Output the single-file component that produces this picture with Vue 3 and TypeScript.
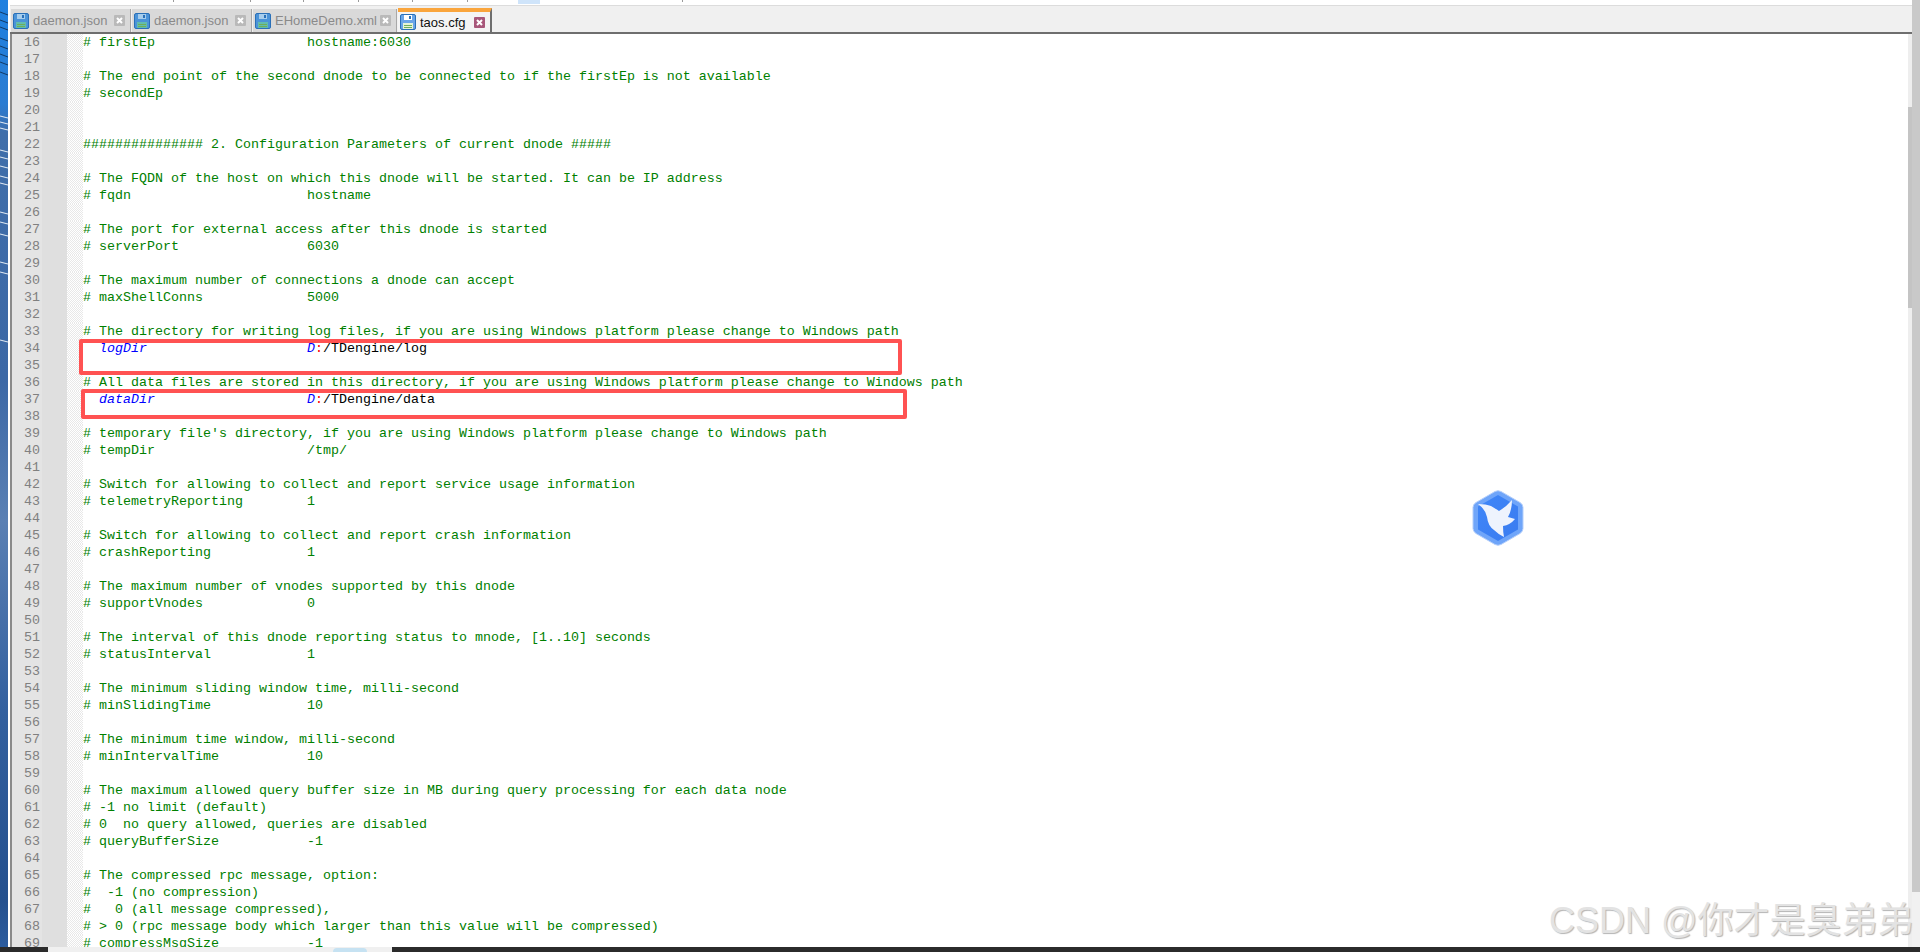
<script setup lang="ts">
type Seg = { t: string; c: string }
type Line = { n: number; segs: Seg[] }

const kv = (name: string, value: string) => `# ${name}`.padEnd(28, ' ') + value

const raw: string[] = [
  kv('firstEp', 'hostname:6030'),
  '',
  '# The end point of the second dnode to be connected to if the firstEp is not available',
  '# secondEp',
  '',
  '',
  '############### 2. Configuration Parameters of current dnode #####',
  '',
  '# The FQDN of the host on which this dnode will be started. It can be IP address',
  kv('fqdn', 'hostname'),
  '',
  '# The port for external access after this dnode is started',
  kv('serverPort', '6030'),
  '',
  '# The maximum number of connections a dnode can accept',
  kv('maxShellConns', '5000'),
  '',
  '# The directory for writing log files, if you are using Windows platform please change to Windows path',
  '@logDir|/TDengine/log',
  '',
  '# All data files are stored in this directory, if you are using Windows platform please change to Windows path',
  '@dataDir|/TDengine/data',
  '',
  "# temporary file's directory, if you are using Windows platform please change to Windows path",
  kv('tempDir', '/tmp/'),
  '',
  '# Switch for allowing to collect and report service usage information',
  kv('telemetryReporting', '1'),
  '',
  '# Switch for allowing to collect and report crash information',
  kv('crashReporting', '1'),
  '',
  '# The maximum number of vnodes supported by this dnode',
  kv('supportVnodes', '0'),
  '',
  '# The interval of this dnode reporting status to mnode, [1..10] seconds',
  kv('statusInterval', '1'),
  '',
  '# The minimum sliding window time, milli-second',
  kv('minSlidingTime', '10'),
  '',
  '# The minimum time window, milli-second',
  kv('minIntervalTime', '10'),
  '',
  '# The maximum allowed query buffer size in MB during query processing for each data node',
  '# -1 no limit (default)',
  '# 0  no query allowed, queries are disabled',
  kv('queryBufferSize', '-1'),
  '',
  '# The compressed rpc message, option:',
  '#  -1 (no compression)',
  '#   0 (all message compressed),',
  '# > 0 (rpc message body which larger than this value will be compressed)',
  kv('compressMsgSize', '-1'),
]

const toSegs = (s: string): Seg[] => {
  if (s.startsWith('@')) {
    const [name, path] = s.slice(1).split('|')
    return [
      { t: ('  ' + name).padEnd(28, ' '), c: 'key' },
      { t: 'D', c: 'key' },
      { t: ':', c: 'colon' },
      { t: path, c: 'plain' },
    ]
  }
  return [{ t: s, c: 'comment' }]
}

const lines: Line[] = raw.map((s, i) => ({ n: 16 + i, segs: toSegs(s) }))

const tabs = [
  { name: 'daemon.json', width: 120, active: false },
  { name: 'daemon.json', width: 120, active: false },
  { name: 'EHomeDemo.xml', width: 144, active: false },
  { name: 'taos.cfg', width: 94, active: true },
]

const ticks = [173, 250, 303, 358, 412, 467, 682]

const darkStreaks = [12, 20, 27, 38, 46, 54, 62, 72]
const lightStreaks = [116, 122, 128, 150, 157, 166, 176, 183, 212, 222, 234, 262, 272, 340]
</script>

<template>
  <div class="screen">
    <svg class="wallpaper" viewBox="0 0 8 947" width="8" height="947" preserveAspectRatio="none">
      <defs>
        <linearGradient id="sky" x1="0" y1="0" x2="0" y2="1">
          <stop offset="0" stop-color="#1f80e0" />
          <stop offset="0.11" stop-color="#2a7cd2" />
          <stop offset="0.14" stop-color="#3f6eaa" />
          <stop offset="0.4" stop-color="#3c68a6" />
          <stop offset="0.55" stop-color="#5a80b4" />
          <stop offset="0.75" stop-color="#33609f" />
          <stop offset="0.95" stop-color="#24508e" />
          <stop offset="1" stop-color="#2c5c9e" />
        </linearGradient>
      </defs>
      <rect width="8" height="947" fill="url(#sky)" />
      <path v-for="y in darkStreaks" :key="'d' + y" :d="`M0 ${y}L8 ${y + 3}`" stroke="#123a66" stroke-width="1" />
      <path v-for="y in lightStreaks" :key="'l' + y" :d="`M0 ${y}L8 ${y + 2}`" stroke="#dfe8f2" stroke-width="1.200" />
    </svg>
    <div class="window">
      <div class="topstrip">
        <i v-for="x in ticks" :key="x" class="tick" :style="{ left: x - 10 + 'px' }"></i>
        <i class="topblob"></i>
      </div>
      <div class="tabbar">
        <div
          v-for="(tab, i) in tabs"
          :key="i"
          class="tab"
          :class="{ active: tab.active }"
          :style="{ width: tab.width + 'px' }"
        >
          <svg class="disk" viewBox="0 0 16 16" width="16" height="16">
            <rect x="0.500" y="0.500" width="15" height="15" rx="1.500" :fill="tab.active ? '#6aa5e8' : '#4b93d8'" stroke="#2a70b8" />
            <rect x="4" y="1" width="8" height="5" :fill="tab.active ? '#ffffff' : '#a7cdec'" />
            <rect x="9" y="2" width="2" height="3" fill="#2a70b8" />
            <rect x="3" y="9" width="10" height="6" :fill="tab.active ? '#e4f3d6' : '#62bcae'" />
            <rect x="4" y="11" width="8" height="1" fill="#6fae5a" />
            <rect x="4" y="13" width="8" height="1" fill="#6fae5a" />
          </svg>
          <span class="tabname">{{ tab.name }}</span>
          <svg class="close" viewBox="0 0 11 11" width="11" height="11">
            <rect width="11" height="11" rx="1" :fill="tab.active ? '#a8577a' : '#b9b9b9'" />
            <path d="M3 3l5 5M8 3l-5 5" stroke="#fff" stroke-width="2" />
          </svg>
        </div>
      </div>
      <div class="editor">
        <div class="lines">
          <div v-for="line in lines" :key="line.n" class="line">
            <span class="num">{{ line.n }}</span>
            <span class="numpad"></span>
            <span class="fold"></span>
            <span class="code"><span v-for="(seg, j) in line.segs" :key="j" :class="seg.c">{{ seg.t }}</span></span>
          </div>
        </div>
        <div class="vscroll"><div class="vthumb"></div></div>
      </div>
    </div>
    <div class="outerscroll"><div class="outerthumb"></div></div>

    <div class="redbox box-a"></div>
    <div class="redbox box-b"></div>

    <svg class="bird" viewBox="0 0 52 58" width="52" height="58">
      <defs>
        <linearGradient id="hexfill" x1="0" y1="0" x2="1" y2="1">
          <stop offset="0" stop-color="#3f86f8" />
          <stop offset="1" stop-color="#3a7cf0" />
        </linearGradient>
      </defs>
      <path d="M23 2.500q3-1.600 6 0l19 11q3 1.800 3 5v21q0 3.200-3 5l-19 11q-3 1.600-6 0l-19-11q-3-1.800-3-5v-21q0-3.200 3-5z" fill="#6fa5f9" stroke="#b4cffb" stroke-width="1" />
      <path d="M26 6L46 17.500V40.500L26 52L6 40.500V17.500z" fill="url(#hexfill)" />
      <path d="M6 15Q14 15 19 17Q24 20 27 22Q34 18 40 11Q40 21 36 28L43 30Q38 36 31 37Q31 43 32 48Q26 45 22 41Q16 37 15 28Q14 21 6 15Z" fill="#eef3fd" />
    </svg>

    <div class="watermark">CSDN @你才是臭弟弟</div>

    <div class="taskbar">
      <div class="taskpiece"><i class="taskblob"></i></div>
    </div>
  </div>
</template>

<style>
html, body { margin: 0; padding: 0; background: #fff; }
</style>

<style scoped>
.screen {
  position: relative;
  width: 1920px;
  height: 952px;
  overflow: hidden;
  display: grid;
  grid-template-columns: 8px 1fr 8px;
  grid-template-rows: 947px 5px;
  background: #fff;
}
.wallpaper { display: block; }
.window {
  display: flex;
  flex-direction: column;
  min-width: 0;
  background: #fff;
}
.topstrip {
  position: relative;
  height: 6px;
  background: #fff;
  border-bottom: 1px solid #dcdcdc;
  box-sizing: border-box;
  flex: none;
  margin-left: 2px;
}
.tick {
  position: absolute;
  top: 0;
  width: 1px;
  height: 2px;
  background: #9a9a9a;
}
.topblob {
  position: absolute;
  left: 508px;
  top: 0;
  width: 22px;
  height: 4px;
  background: #cfe4fa;
}
.tabbar {
  flex: none;
  height: 28px;
  margin-left: 2px;
  padding: 2px 0 0 1px;
  box-sizing: border-box;
  display: flex;
  align-items: flex-end;
  gap: 1px;
  background: #f0f0f0;
  border-bottom: 2px solid #6e6e6e;
}
.tab {
  display: flex;
  align-items: center;
  box-sizing: border-box;
  height: 23px;
  padding: 0 5px 0 2px;
  background: #d9d9d9;
  color: #8a8a8a;
  font-family: "Liberation Sans", Arial, sans-serif;
  font-size: 13px;
  border-right: 1px solid #a8a8a8;
}
.tab.active {
  height: 24px;
  background: #f4f4f4;
  color: #111;
  border-top: 4px solid #faa53c;
  border-right: 2px solid #6e6e6e;
}
.disk { flex: none; }
.tabname { margin-left: 4px; flex: 1; white-space: nowrap; }
.close { flex: none; }
.editor {
  flex: 1;
  min-height: 0;
  display: flex;
  background: #fff;
}
.lines {
  flex: 1;
  min-width: 0;
  overflow: hidden;
  border-left: 2px solid #8a8a8a;
  margin-left: 2px;
}
.line {
  display: flex;
  height: 17px;
  line-height: 17px;
  font-family: "Liberation Mono", "Courier New", monospace;
  font-size: 13.33px;
  white-space: pre;
}
.num {
  flex: none;
  width: 30px;
  box-sizing: border-box;
  text-align: right;
  padding-right: 2px;
  color: #808080;
  background: #e4e4e4;
}
.numpad {
  flex: none;
  width: 25px;
  background: #dfdfdf;
}
.fold {
  flex: none;
  width: 16px;
  background-color: #fff;
  background-image:
    linear-gradient(45deg, #e8e8e8 25%, transparent 25%, transparent 75%, #e8e8e8 75%),
    linear-gradient(45deg, #e8e8e8 25%, transparent 25%, transparent 75%, #e8e8e8 75%);
  background-size: 2px 2px;
  background-position: 0 0, 1px 1px;
}
.code { flex: 1; min-width: 0; color: #008000; }
.comment { color: #008000; }
.key { color: #0000ff; font-style: italic; }
.colon { color: #ff0000; }
.plain { color: #000; }
.vscroll {
  flex: none;
  width: 4px;
  background: #eeeeee;
  padding-top: 73px;
  box-sizing: border-box;
}
.vthumb {
  height: 201px;
  background: #c4c4c4;
}
.outerscroll {
  background: #f1f1f1;
}
.outerthumb {
  height: 892px;
  background: #c9c9c9;
}
.redbox {
  position: absolute;
  box-sizing: border-box;
  border: 4px solid #ff5252;
  border-radius: 2px;
}
.box-a { left: 79px; top: 339px; width: 823px; height: 36px; }
.box-b { left: 81px; top: 389px; width: 826px; height: 30px; }
.bird { position: absolute; left: 1472px; top: 489px; }
.watermark {
  position: absolute;
  left: 1549px;
  top: 898px;
  white-space: nowrap;
  font-family: "Liberation Sans", "Noto Sans CJK SC", sans-serif;
  font-size: 36px;
  line-height: 46px;
  color: #e3e3e3;
  text-shadow: 1px 1px 1px #b4b4b4;
}
.taskbar {
  grid-column: 1 / -1;
  background: #2b2b2b;
  position: relative;
  padding-left: 48px;
}
.taskpiece {
  position: relative;
  width: 344px;
  height: 5px;
  background: #f0f0f0;
}
.taskblob {
  position: absolute;
  left: 285px;
  top: 1px;
  width: 34px;
  height: 4px;
  border-radius: 4px 4px 0 0;
  background: #c6e2f2;
}
</style>
